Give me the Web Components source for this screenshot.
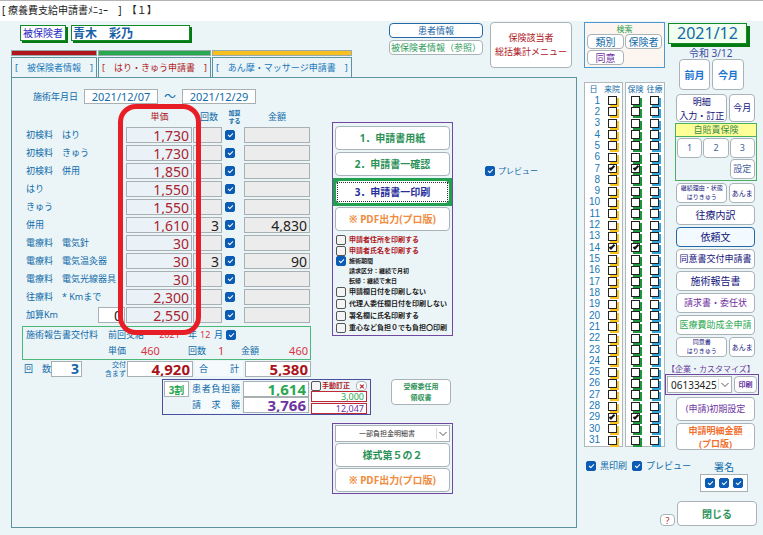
<!DOCTYPE html>
<html lang="ja">
<head>
<meta charset="utf-8">
<title>療養費支給申請書メニュー</title>
<style>
html, body { height: 100%; }
body { margin: 0; background: #ebf5f8; font: 9px/12px "Noto Sans", "Noto Sans CJK JP", sans-serif; color: #0f6aa8; }
</style>
</head>
<body>
<claim-app></claim-app>
<script>
const BASE = `
*, *::before, *::after { box-sizing: border-box; }
:host { display: block; box-sizing: border-box; }
input, button, select { font: inherit; color: inherit; margin: 0; }
p, h1, table { margin: 0; }
`;
function define(name, css, html) {
  customElements.define(name, class extends HTMLElement {
    constructor() {
      super();
      const t = document.createElement('template');
      t.innerHTML = `<style>${BASE}${css}</style>${typeof html === 'function' ? html(this) : html}`;
      this.attachShadow({ mode: 'open' }).append(t.content.cloneNode(true));
    }
  });
}

/* push button */
define('ui-button', `
:host { height: 20px; }
button { display: block; width: 100%; height: 100%; padding: 0; background: var(--bg, #fff); border: 1px solid var(--edge, #a9b3b8);
  border-radius: 4px; white-space: nowrap; line-height: inherit; text-align: center; overflow: hidden; }
`, '<button type="button"><slot></slot></button>');

/* blue tick box with its caption */
define('ui-check', `
label { display: flex; align-items: center; gap: var(--gap, 3px); white-space: nowrap; }
input { appearance: none; flex: none; width: 10px; height: 10px; border: 1px solid #555; border-radius: 2px; background: #f4f4f4; display: grid; place-items: center; }
input:checked { background: #0a5cb4; border-color: #0a5cb4; }
input:checked::before { content: ""; width: 5px; height: 3px; border: solid #fff; border-width: 0 0 1px 1px; transform: translateY(-1px) rotate(-45deg); }
`, el => `<label><input type="checkbox" aria-label="${el.getAttribute('name') || ''}" ${el.hasAttribute('on') ? 'checked' : ''}><slot></slot></label>`);

/* boxed value */
define('ui-field', `
:host { height: 16px; }
input { display: block; width: 100%; height: 100%; padding: 0 2px; border: 1px solid var(--edge, #a8b0b4); border-radius: 0; background: var(--bg, #fff);
  text-align: var(--align, right); line-height: 14px; outline: 0; }
`, el => `<input type="text" aria-label="${el.getAttribute('name')}" value="${el.getAttribute('value') || ''}">`);

define('title-strip', `
:host { height: 21px; background: #fff; border-top: 1px solid #b4b4b4; padding: 2px 2px 0; }
h1 { font: inherit; font-size: 10px; line-height: 14px; color: #222; white-space: pre; }
`, '<h1>[ 療養費支給申請書ﾒﾆｭｰ    ]  【１】</h1>');

define('insured-name', `
:host { display: flex; gap: 5px; }
span, output { background: #fff; border: 1px solid #128a28; box-shadow: 2px 2px 0 #057a12; height: 16px; line-height: 14px; white-space: nowrap; }
span { padding: 0 2px; color: #2a2ac0; font-size: 10px; }
output { width: 119px; padding: 0 1px; color: #1660a8; font-size: 12px; line-height: 16px; font-weight: bold; }
`, '<span>被保険者</span><output>青木　彩乃</output>');

define('tab-row', `
:host { display: flex; gap: 1px; }
button { padding: 0; border: 0; background: none; color: #1878b8; }
button::before { content: ""; display: block; height: 6px; background: var(--bar); border: 1px solid #9aa; margin-bottom: 1px; }
span { display: block; height: 20px; padding: 0 3px; border: 1px solid #5c93a0; border-bottom: 0; line-height: 19px; white-space: nowrap; }
`, `<button type="button" style="--bar:#b0161c"><span>[　被保険者情報　]</span></button>
<button type="button" style="--bar:#2aa850;color:#b01a24"><span>[　はり・きゅう申請書　]</span></button>
<button type="button" style="--bar:#f8bf20"><span>[　あん摩・マッサージ申請書　]</span></button>`);

define('top-area', `
:host { display: flex; height: 56px; }
.l { display: flex; flex-direction: column; flex: 1; }
insured-name { margin: 4px 0 auto 9px; }
.info { width: 94px; padding-top: 2px; margin-right: 7px; display: grid; gap: 2px; align-content: start; }
.info ui-button { height: 15px; }
.menu { width: 82px; height: 46px; margin: 1px 5px 0 0; color: #b0161c; line-height: 14px; }
`, `<div class="l"><insured-name></insured-name><tab-row></tab-row></div>
<div class="info"><ui-button style="--edge:#2468a4;color:#1565a8">患者情報</ui-button><ui-button style="color:#2e9a5c">被保険者情報（参照）</ui-button></div>
<ui-button class="menu">保険該当者<br>総括集計メニュー</ui-button>`);

const RATES = [
  ['初検料　はり', '1,730'], ['初検料　きゅう', '1,730'], ['初検料　併用', '1,850'], ['はり', '1,550'], ['きゅう', '1,550'],
  ['併用', '1,610', '3', '4,830'], ['電療料　電気針', '30'], ['電療料　電気温灸器', '30', '3', '90'],
  ['電療料　電気光線器具', '30'], ['往療料　* Kmまで', '2,300'], ['加算Km', '2,550']];
define('rate-table', `
table { border-collapse: collapse; table-layout: fixed; width: 100%; }
th, td { padding: 0; height: 18px; font-weight: normal; vertical-align: middle; }
thead th { text-align: center; }
tbody th { text-align: left; padding-left: 4px; white-space: nowrap; }
tbody th div { display: flex; justify-content: space-between; align-items: center; }
.price { color: #a8141c; }
.small { font-size: 6px; line-height: 8px; font-weight: bold; }
ui-field { font-size: 14px; --bg: #ececec; color: #222; margin-right: 1px; }
.price ui-field { --bg: #eaf2f7; color: #a82430; }
.count ui-field { margin-right: 3px; }
.km { width: 27px; --bg: #fff; }
.last { margin: 0; }
`, `<table>
<colgroup><col style="width:104px"><col style="width:67px"><col style="width:32px"><col style="width:19px"><col></colgroup>
<thead><tr><th></th><th class="price">単価</th><th>回数</th><th class="small">加算<br>する</th><th>金額</th></tr></thead>
<tbody>${RATES.map(([n, p, c = '', a = '']) => `<tr>
<th scope="row"><div>${n}${n === '加算Km' ? '<ui-field class="km" name="加算Km" value="0"></ui-field>' : ''}</div></th>
<td class="price"><ui-field name="${n} 単価" value="${p}"></ui-field></td>
<td class="count"><ui-field name="${n} 回数" value="${c}"></ui-field></td>
<td><ui-check on name="${n} 加算する"></ui-check></td>
<td><ui-field class="last" name="${n} 金額" value="${a}"></ui-field></td></tr>`).join('')}</tbody></table>`);

define('report-fee', `
:host { border: 1px solid #4cb878; height: 34px; padding: 0 2px 0 3px; }
div { display: flex; align-items: center; height: 16px; white-space: nowrap; }
b { font-weight: normal; color: #d83440; }
.a { width: 82px; } .b { width: 43px; } .c { width: 37px; text-align: center; } .d { width: 12px; } .e { width: 14px; }
.f { width: 33px; } .g { width: 47px; } .h { width: 30px; } .i { width: 23px; } .j { flex: 1; text-align: right; }
.big { font-size: 11px; }
`, `<div><span class="a">施術報告書交付料</span><span class="b">前回交給</span><b class="c">2021</b><span class="d">年</span><b class="e">12</b><span class="d">月</span><ui-check on name="交付料"></ui-check></div>
<div><span class="a"></span><span class="f">単価</span><b class="g big">460</b><span class="h">回数</span><b class="i big">1</b><span class="h">金額</span><b class="j big">460</b></div>`);

define('total-row', `
:host { display: flex; align-items: center; height: 17px; }
ui-field { font-size: 15px; font-weight: bold; color: #a8141c; }
.t { width: 29px; padding-left: 2px; white-space: nowrap; }
.n { width: 31px; color: #1565a8; font-size: 14px; }
.s { flex: 1; text-align: right; font-size: 7px; line-height: 9px; padding-right: 1px; }
.m { width: 66px; }
.g { width: 48px; margin: 0 2px 0 2px; height: 15px; padding: 2px 4px; background: #f5fafd; display: flex; justify-content: space-between; }
`, `<span class="t">回　数</span><ui-field class="n" name="回数" value="3"></ui-field><span class="s">交付<br>含まず</span>
<ui-field class="m" name="交付含まず" value="4,920"></ui-field><span class="g"><span>合</span><span>計</span></span><ui-field class="m" name="合計" value="5,380"></ui-field>`);

define('treatment-form', `
:host { width: 289px; position: relative; padding-top: 11px; }
.dates { display: flex; align-items: center; margin: 0 0 4px 11px; }
.dates span { width: 51px; }
.dates i { width: 24px; text-align: center; font-style: normal; font-size: 12px; }
.dates ui-field { width: 74px; height: 15px; font-size: 11px; --align: center; }
report-fee { margin-top: 2px; }
rate-table { padding-right: 1px; }
.ring { position: absolute; left: 96px; top: 26px; width: 83px; height: 231px; border: 5px solid #e81e26; border-radius: 18px; pointer-events: none; }
`, `<div class="dates"><span>施術年月日</span><ui-field name="開始日" value="2021/12/07"></ui-field><i>～</i><ui-field name="終了日" value="2021/12/29"></ui-field></div>
<rate-table></rate-table><report-fee></report-fee><total-row></total-row><div class="ring"></div>`);

define('print-panel', `
:host { width: 121px; border: 1px solid #7048a0; padding: 3px 2px 1px; }
ui-button { height: 24px; margin-bottom: 2px; font-size: 10px; font-weight: bold; color: #2c9258; }
.hot { height: 28px; margin: 0 -2px 1px; border: 3px solid #22a050; background: #22a050; color: #28309c; --edge: #fff; position: relative; }
.hot::after { content: ""; position: absolute; inset: 1px; border: 1px dotted #334; pointer-events: none; }
.pdf { color: #f08c40; margin-bottom: 3px; }
ul { margin: 0; padding: 0; list-style: none; font-size: 7px; line-height: 12px; font-weight: bold; color: #222; }
li { height: 12px; padding-left: 1px; }
.red { color: #b0161c; height: 11px; }
.s { font-size: 6px; height: 10px; line-height: 10px; }
.n { padding-left: 14px; }
`, `<ui-button>1．申請書用紙</ui-button><ui-button>2．申請書一確認</ui-button><ui-button class="hot">3．申請書一印刷</ui-button><ui-button class="pdf">※ PDF出力(プロ版)</ui-button>
<ul><li class="red"><ui-check>申請者住所を印刷する</ui-check></li><li class="red"><ui-check>申請者氏名を印刷する</ui-check></li>
<li class="s"><ui-check on>施術期間</ui-check></li><li class="s n">請求区分：継続で月初</li><li class="s n">転帰：継続で末日</li>
<li><ui-check>申請欄日付を印刷しない</ui-check></li><li><ui-check>代理人委任欄日付を印刷しない</ui-check></li><li><ui-check>署名欄に氏名印刷する</ui-check></li><li><ui-check>重心など負担０でも負担〇印刷</ui-check></li></ul>`);

define('burden-box', `
:host { width: 209px; height: 36px; border: 1px solid #4a50a0; padding: 1px; display: grid; grid-template-columns: 25px 50px 66px 1fr; column-gap: 2px; grid-template-rows: 16px 16px; }
.w { --align: center; color: #2aa850; font-weight: bold; font-size: 10px; }
.t { background: #f5fafd; display: flex; justify-content: space-between; align-items: center; padding: 0 1px; }
.v { font-size: 15px; font-weight: bold; }
.fix { grid-column: 4; grid-row: 1 / 3; color: #b0161c; width: 56px; }
.fix div { display: flex; align-items: center; justify-content: space-between; font-size: 7px; font-weight: bold; height: 10px; }
.fix ui-check { --gap: 1px; }
.fix ui-button { width: 11px; height: 10px; line-height: 7px; font-size: 7px; }
.fix ui-field { --edge: #c02838; height: 11px; font-size: 9px; margin-bottom: 1px; }
`, `<ui-field class="w" name="負担割合" value="3割"></ui-field><span class="t"><span>患</span><span>者</span><span>負</span><span>担</span><span>額</span></span><ui-field class="v" style="color:#2aa850" name="患者負担額" value="1,614"></ui-field>
<span style="grid-column:1"></span><span class="t" style="grid-column:2"><span>請</span><span>求</span><span>額</span></span><ui-field class="v" style="color:#6c34a0" name="請求額" value="3,766"></ui-field>
<div class="fix"><div><ui-check>手動訂正</ui-check><ui-button>✕</ui-button></div><ui-field style="color:#2aa850" name="訂正負担額" value="3,000"></ui-field><ui-field style="color:#6c34a0" name="訂正請求額" value="12,047"></ui-field></div>`);

/* drop-down with a thin chevron */
define('ui-select', `
:host { display: grid; height: 17px; }
select, svg { grid-area: 1 / 1; }
select { appearance: none; width: 100%; height: 100%; border: 1px solid var(--edge, #a8b0b4); border-radius: 0; background: #fff; padding: 0 14px 0 3px; text-align: var(--align, left); }
svg { justify-self: end; align-self: center; width: 14px; height: 11px; pointer-events: none; }
`, el => `<select aria-label="${el.getAttribute('name')}"><option>${el.getAttribute('value')}</option></select>
<svg viewBox="0 0 14 11"><path d="M.5 0v11" stroke="#d8dcde"/><path d="M3.500 4l3.500 3.500L10.500 4" fill="none" stroke="#555"/></svg>`);

define('form-five', `
:host { width: 121px; border: 1px solid #7048a0; padding: 1px 2px; }
ui-select { font-size: 7px; --align: center; color: #333; }
ui-button { height: 24px; font-size: 10px; font-weight: bold; margin-top: 1px; color: #2c9258; }
.pdf { color: #f08c40; }
`, `<ui-select name="明細書種別" value="一部負担金明細書"></ui-select><ui-button>様式第５の２</ui-button><ui-button class="pdf">※ PDF出力(プロ版)</ui-button>`);

define('work-panel', `
:host { flex: 1; border: 1px solid #5c93a0; padding-left: 10px; }
.r { display: flex; align-items: flex-start; }
print-panel { margin: 44px 0 0 21px; }
.pv { margin: 87px 0 0 32px; font-size: 8px; }
.b { padding-left: 140px; margin-top: 2px; gap: 20px; }
.rc { width: 60px; height: 26px; color: #2c9258; font-size: 7px; font-weight: bold; line-height: 11px; }
form-five { margin: 8px 0 0 310px; }
`, `<div class="r"><treatment-form></treatment-form><print-panel></print-panel><ui-check class="pv" on>プレビュー</ui-check></div>
<div class="r b"><burden-box></burden-box><ui-button class="rc">受療委任用<br>領収書</ui-button></div><form-five></form-five>`);

const DAYS = Array.from({ length: 31 }, (_, i) => i + 1), ON = [7, 14, 29];
const box = (d, what, col, on) => `<td><input type="checkbox" aria-label="${d}日 ${what}" style="--s:${col}" ${on && ON.includes(d) ? 'checked' : ''}></td>`;
define('day-list', `
:host { display: flex; gap: 2px; }
table { border: 1px solid #b0b8bc; background: #fff; border-spacing: 0; height: 365px; table-layout: fixed; }
.a { width: 39px; } .b { flex: 1; }
th, td { padding: 0; font-weight: normal; line-height: 10px; vertical-align: middle; }
thead th { height: 12px; font-size: 8px; white-space: nowrap; }
tbody th { text-align: right; font-family: "Liberation Sans", sans-serif; font-size: 10px; padding-right: 2px; color: #1878b8; }
td { text-align: center; }
input { appearance: none; display: grid; place-items: center; width: 9px; height: 9px; margin: 0 auto; background: #fff; border: 1px solid #222; box-shadow: 2px 2px 0 var(--s); }
input:checked::before { content: ""; width: 6px; height: 3px; border: solid #111; border-width: 0 0 2px 2px; transform: translateY(-1px) rotate(-45deg); }
`, `<table class="a"><colgroup><col style="width:17px"><col></colgroup><thead><tr><th>日</th><th>来院</th></tr></thead><tbody>${DAYS.map(d => `<tr><th scope="row">${d}</th>${box(d, '来院', '#fcc21c', 1)}</tr>`).join('')}</tbody></table>
<table class="b"><thead><tr><th>保険</th><th>往療</th></tr></thead><tbody>${DAYS.map(d => `<tr>${box(d, '保険', '#1c963c', 1)}${box(d, '往療', '#30a4dc', 0)}</tr>`).join('')}</tbody></table>`);

define('search-box', `
:host { height: 46px; border: 1px solid #4c98d0; background: #fdf5f0; padding: 0 2px; }
p { text-align: center; color: #2aa050; font-size: 8px; line-height: 11px; }
div { display: grid; grid-template-columns: 37px 1fr; gap: 1px; }
ui-button { height: 15px; font-size: 10px; }
`, `<p>検索</p><div><ui-button>類別</ui-button><ui-button>保険者</ui-button><ui-button style="color:#7030a0">同意</ui-button></div>`);

define('action-list', `
:host { color: #14147c; }
.date { display: block; width: 79px; height: 21px; margin: 2px 0 0 -7px; background: #f0fff0; border: 1px solid #128a28; box-shadow: 3px 3px 0 #057a12; color: #1668a8; font-size: 16px; line-height: 19px; text-align: center; }
.era { margin: 3px 0 0 14px; font-size: 10px; color: #3c4ca0; }
.mon { display: grid; grid-template-columns: 31px 32px; gap: 2px; padding-left: 4px; }
.mon ui-button { height: 31px; color: #1874d0; font-size: 10px; font-weight: bold; }
.pair { display: grid; grid-template-columns: 2fr 1fr; gap: 2px; padding: 0 2px 0 1px; }
.pair.one { margin-top: 4px; line-height: 14px; } .one ui-button { height: 28px; }
.pair.two { font-size: 7px; line-height: 9px; }
.tiny { font-size: 6px; }
.jb { border: 1px solid #4cb060; margin: 1px 0 2px; height: 58px; display: grid; grid-template-columns: repeat(3, 1fr); grid-template-rows: 13px 20px 20px; gap: 1px; padding: 0 1px; color: #48609c; }
.jb p { grid-column: 1 / 4; background: #ffff98; margin: 0 -1px; border-bottom: 1px solid #4cb060; text-align: center; color: #3c8c50; }
.jb .set { grid-column: 3; }
.stack { display: grid; gap: 2px; padding: 0 2px 0 1px; margin: 2px 0; }
.stack ui-button { height: 20px; }
.l { font-size: 10px; }
.cap { color: #6c3c98; text-align: center; margin: 6px 0 0 -10px; white-space: nowrap; font-size: 8px; line-height: 11px; }
.combo { display: grid; grid-template-columns: 1fr 23px; gap: 2px; border: 1px solid #7048a0; padding: 1px; margin: 0 -2px 2px -10px; }
.combo ui-select { font-size: 10px; color: #222; }
.combo ui-button { height: 17px; font-size: 7px; font-weight: bold; color: #6030a0; }
`, `<output class="date">2021/12</output><p class="era">令和 3/12</p>
<div class="mon"><ui-button>前月</ui-button><ui-button>今月</ui-button></div>
<div class="pair one"><ui-button>明細<br>入力・訂正</ui-button><ui-button>今月</ui-button></div>
<div class="jb"><p>自賠責保険</p><ui-button>1</ui-button><ui-button>2</ui-button><ui-button>3</ui-button><ui-button class="set">設定</ui-button></div>
<div class="pair two"><ui-button class="tiny">継続理由・状態<br>はりきゅう</ui-button><ui-button>あんま</ui-button></div>
<div class="stack"><ui-button class="l">往療内訳</ui-button><ui-button class="l" style="--edge:#2468a4;--bg:#f2faff">依頼文</ui-button><ui-button>同意書交付申請書</ui-button><ui-button class="l">施術報告書</ui-button><ui-button style="color:#7030a0">請求書・委任状</ui-button><ui-button style="color:#2aa850">医療費助成金申請</ui-button></div>
<div class="pair two"><ui-button class="tiny">同意書<br>はりきゅう</ui-button><ui-button>あんま</ui-button></div>
<p class="cap">【企業・カスタマイズ】</p>
<div class="combo"><ui-select name="企業・カスタマイズ" value="06133425"></ui-select><ui-button>印刷</ui-button></div>
<div class="stack" style="margin-bottom:0"><ui-button style="color:#6c34a0;height:24px">(申請)初期設定</ui-button><ui-button style="color:#f07030;height:27px;line-height:13px;font-weight:bold">申請明細金額<br>(プロ版)</ui-button></div>`);

define('side-foot', `
.r { display: flex; gap: 5px; padding-left: 2px; }
.r > ui-check { --gap: 4px; }
.sign { margin: 1px 9px 0 auto; width: 48px; text-align: center; }
.sign p { line-height: 12px; font-size: 10px; margin-bottom: 1px; }
.sign div { display: flex; gap: 4px; justify-content: center; background: #fff; border: 1px solid #a8b0b4; padding: 3px 0; }
.end { display: flex; justify-content: flex-end; align-items: flex-end; gap: 2px; margin-top: 9px; }
.q { width: 15px; height: 12px; line-height: 9px; color: #c02020; }
.x { width: 80px; height: 25px; font-size: 10px; font-weight: bold; color: #2c9258; }
`, `<div class="r"><ui-check on>黒印刷</ui-check><ui-check on>プレビュー</ui-check><div class="sign"><p>署名</p><div><ui-check on name="署名1"></ui-check><ui-check on name="署名2"></ui-check><ui-check on name="署名3"></ui-check></div></div></div>
<div class="end"><ui-button class="q">?</ui-button><ui-button class="x">閉じる</ui-button></div>`);

define('claim-app', `
:host { display: flex; flex-direction: column; min-height: 100vh; }
main { flex: 1; display: flex; gap: 7px; padding: 0 6px 7px 11px; }
.left { flex: 1; display: flex; flex-direction: column; }
aside { width: 173px; display: grid; grid-template-columns: 81px 1fr; column-gap: 10px; align-content: start; }
search-box { margin: 1px 0 14px; }
side-foot { grid-column: 1 / 3; margin-top: 10px; }
`, `<title-strip></title-strip><main><div class="left"><top-area></top-area><work-panel></work-panel></div>
<aside><div><search-box></search-box><day-list></day-list></div><action-list></action-list><side-foot></side-foot></aside></main>`);
</script>
</body>
</html>
